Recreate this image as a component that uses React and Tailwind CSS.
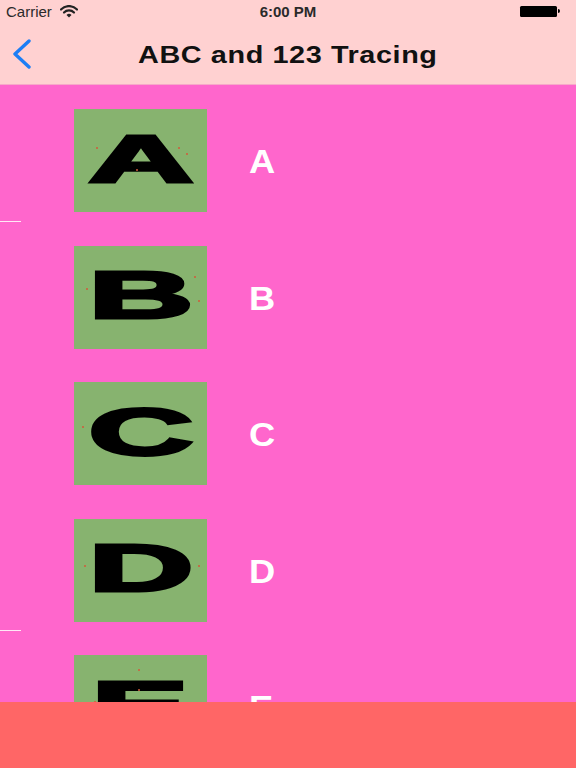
import React from "react";

const rows = ["A", "B", "C", "D", "E"];

function Dot({ x, y }) {
  return (
    <span
      className="absolute w-[2px] h-[2px] rounded-full bg-[#d05a3a]"
      style={{ left: x, top: y }}
    />
  );
}

const dots = {
  A: [[22, 38], [104, 38], [62, 60], [112, 44]],
  B: [[12, 42], [120, 30], [124, 54]],
  C: [[8, 44]],
  D: [[10, 46], [124, 46]],
  E: [[64, 14], [64, 34], [20, 46]],
};

function Row({ letter, sep }) {
  return (
    <div className="relative h-[136.5px] shrink-0">
      <div className="flex items-start h-full">
        <div className="relative ml-[74px] mt-[24px] w-[133px] h-[103px] bg-[#87b36f] flex items-center justify-center overflow-hidden">
          <span
            className="inline-block font-bold text-black leading-none scale-x-[2.2] text-[66px] -mt-[4px] [-webkit-text-stroke:3px_black] [paint-order:stroke]"
            style={{ fontFamily: '"Liberation Sans", Arial, sans-serif' }}
          >
            {letter}
          </span>
          {(dots[letter] || []).map(([x, y], i) => (
            <Dot key={i} x={x} y={y} />
          ))}
        </div>
        <div
          className="ml-[42px] mt-[60px] text-white font-bold text-[33px] leading-none scale-x-[1.1] origin-left"
          style={{ fontFamily: '"Liberation Sans", Arial, sans-serif' }}
        >
          {letter}
        </div>
      </div>
      {sep && (
        <div className="absolute left-0 bottom-0 w-[21px] h-[1px] bg-[#ffe8f6]" />
      )}
    </div>
  );
}

export default function App() {
  return (
    <div
      className="w-[576px] h-[768px] flex flex-col bg-[#ff66cc] overflow-hidden"
      style={{ fontFamily: '"Liberation Sans", Arial, sans-serif' }}
    >
      <div className="bg-[#ffd1d1] h-[85px] shrink-0 flex flex-col border-b border-[#f7a9c9]">
        <div className="h-[22px] relative flex items-center px-[6px] text-[#2a2a2a]">
          <span className="text-[15px] leading-none">Carrier</span>
          <svg width="18" height="13" viewBox="0 0 18 13" className="ml-[8px]">
            <path d="M1 4.5 A11 11 0 0 1 17 4.5" stroke="#222" strokeWidth="2.2" fill="none" strokeLinecap="round" />
            <path d="M4 7.5 A7 7 0 0 1 14 7.5" stroke="#222" strokeWidth="2.2" fill="none" strokeLinecap="round" />
            <path d="M9 12.5 L6.5 10 A3.5 3.5 0 0 1 11.5 10 Z" fill="#222" />
          </svg>
          <span className="absolute left-0 right-0 text-center text-[15px] font-bold leading-none pointer-events-none">
            6:00 PM
          </span>
          <div className="ml-auto mr-[10px] flex items-center">
            <div className="w-[37px] h-[11px] bg-black rounded-[1.5px]" />
            <div className="w-[2px] h-[4px] bg-black ml-[1px] rounded-r-sm" />
          </div>
        </div>
        <div className="flex-1 relative flex items-center justify-center">
          <svg width="24" height="30" viewBox="0 0 24 30" className="absolute left-[9px] top-[17px]">
            <path d="M20 2 L6 15 L20 28" stroke="#1c7ef5" strokeWidth="3.4" fill="none" strokeLinecap="round" strokeLinejoin="round" />
          </svg>
          <span className="text-[24px] font-bold text-[#111] tracking-[0.5px] scale-x-[1.2] inline-block mt-[3px]">
            ABC and 123 Tracing
          </span>
        </div>
      </div>
      <div className="flex-1 overflow-hidden flex flex-col">
        {rows.map((l, i) => (
          <Row key={l} letter={l} sep={i === 0 || i === 3} />
        ))}
      </div>
      <div className="h-[66px] shrink-0 bg-[#ff6666]" />
    </div>
  );
}
